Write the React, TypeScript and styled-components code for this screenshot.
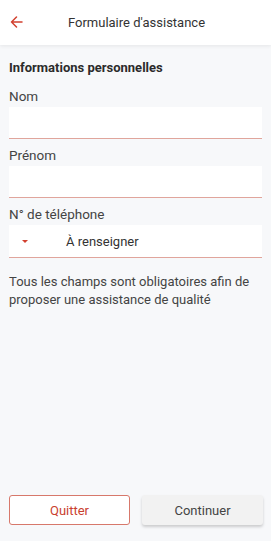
import styled, { createGlobalStyle } from "styled-components";

const GlobalStyle = createGlobalStyle`
  html, body {
    margin: 0;
    padding: 0;
    background: #f7f8fa;
  }
  body {
    font-family: Roboto, "Liberation Sans", Arial, sans-serif;
  }
`;

export default function App() {
  return (
    <Screen>
      <GlobalStyle />
      <Header>
        <BackButton aria-label="Retour">
          <svg width="13" height="12" viewBox="0 0 13 12" fill="none">
            <path
              d="M12 6H1.5M6.5 1L1.5 6l5 5"
              stroke="#d2402f"
              strokeWidth="1.5"
              strokeLinecap="round"
              strokeLinejoin="round"
            />
          </svg>
        </BackButton>
        <Title>Formulaire d'assistance</Title>
      </Header>
      <Content>
        <SectionTitle>Informations personnelles</SectionTitle>
        <Field>
          <Label>Nom</Label>
          <Input />
        </Field>
        <Field>
          <Label>Prénom</Label>
          <Input />
        </Field>
        <Field>
          <Label>N° de téléphone</Label>
          <PhoneBox>
            <Caret />
            <Placeholder>À renseigner</Placeholder>
          </PhoneBox>
        </Field>
        <Notice>
          Tous les champs sont obligatoires afin de proposer une assistance de
          qualité
        </Notice>
      </Content>
      <Footer>
        <Button $variant="outline">Quitter</Button>
        <Button $variant="filled">Continuer</Button>
      </Footer>
    </Screen>
  );
}

const Screen = styled.div`
  display: flex;
  flex-direction: column;
  width: 271px;
  height: 541px;
  background: #f7f8fa;
  overflow: hidden;
`;

const Header = styled.div`
  position: relative;
  display: flex;
  align-items: center;
  justify-content: center;
  height: 45px;
  background: #ffffff;
  box-shadow: 0 1px 4px rgba(0, 0, 0, 0.08);
  z-index: 1;
`;

const BackButton = styled.button`
  position: absolute;
  left: 10px;
  top: 16px;
  display: flex;
  padding: 0;
  border: none;
  background: none;
`;

const Title = styled.div`
  font-size: 13px;
  color: #333333;
  margin-left: 2px;
`;

const Content = styled.div`
  flex: 1;
  display: flex;
  flex-direction: column;
  padding: 14px 9px 0 9px;
`;

const SectionTitle = styled.div`
  font-size: 13px;
  font-weight: 700;
  color: #2b2b2b;
  line-height: 18px;
  margin-bottom: 10px;
`;

const Field = styled.div`
  display: flex;
  flex-direction: column;
  margin-bottom: 7px;
`;

const Label = styled.div`
  font-size: 13.5px;
  color: #444444;
  line-height: 18px;
  margin-bottom: 2px;
`;

const Input = styled.input`
  box-sizing: border-box;
  height: 32px;
  border: none;
  border-bottom: 1px solid #e0a59c;
  background: #ffffff;
  outline: none;
`;

const PhoneBox = styled.div`
  box-sizing: border-box;
  display: flex;
  align-items: center;
  height: 33px;
  background: #ffffff;
  border-bottom: 1px solid #e0a59c;
  padding-left: 13px;
`;

const Caret = styled.span`
  width: 0;
  height: 0;
  border-left: 3.5px solid transparent;
  border-right: 3.5px solid transparent;
  border-top: 3.5px solid #d2402f;
  margin-right: 38px;
`;

const Placeholder = styled.span`
  font-size: 13px;
  color: #333333;
`;

const Notice = styled.p`
  margin: 8px 0 0 0;
  font-size: 13px;
  line-height: 18px;
  color: #444444;
`;

const Footer = styled.div`
  display: grid;
  grid-template-columns: 1fr 1fr;
  gap: 12px;
  padding: 0 8px 16px 9px;
`;

const Button = styled.button<{ $variant: "outline" | "filled" }>`
  box-sizing: border-box;
  height: 30px;
  border-radius: 3px;
  font-family: Roboto, "Liberation Sans", Arial, sans-serif;
  font-size: 13px;
  cursor: pointer;
  border: ${(p) =>
    p.$variant === "outline" ? "1px solid #d7786b" : "none"};
  background: ${(p) => (p.$variant === "outline" ? "#ffffff" : "#f2f2f2")};
  color: ${(p) => (p.$variant === "outline" ? "#c9402f" : "#444444")};
  box-shadow: ${(p) =>
    p.$variant === "filled" ? "0 2px 3px rgba(0, 0, 0, 0.18)" : "none"};
`;
